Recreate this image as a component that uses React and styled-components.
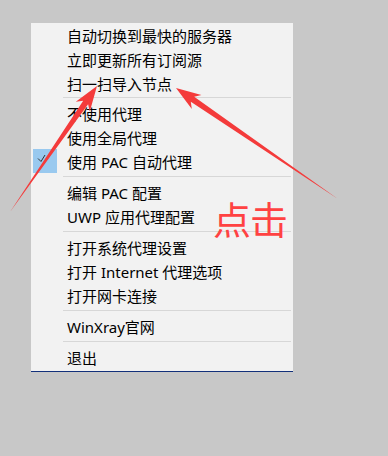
import React from "react";
import styled, { createGlobalStyle } from "styled-components";

const Global = createGlobalStyle`
  html, body { margin: 0; padding: 0; background: #c8c8c8; }
  #root { width: 388px; height: 456px; }
`;

const Screen = styled.div`
  position: relative;
  width: 388px;
  height: 456px;
  box-sizing: border-box;
  padding: 23px 0 0 31px;
  background: #c8c8c8;
  overflow: hidden;
  font-family: "Segoe UI", "Noto Sans", "Noto Sans CJK SC", sans-serif;
`;

const Menu = styled.div`
  width: 262px;
  box-sizing: border-box;
  background: #f2f2f2;
  padding-bottom: 2px;
  border-bottom: 1px solid #13307a;
  display: flex;
  flex-direction: column;
`;

const Row = styled.div`
  height: 24px;
  display: flex;
  align-items: center;
  font-size: 15px;
  color: #000;
  white-space: nowrap;
`;

const Gutter = styled.div`
  width: 36px;
  height: 24px;
  box-sizing: border-box;
  padding-left: 2px;
  flex: none;
`;

const CheckBox = styled.div`
  width: 24px;
  height: 24px;
  background: #99c9ef;
  display: flex;
  align-items: center;
  justify-content: center;
`;

const Separator = styled.div`
  height: 1px;
  background: #d7d7d7;
  margin: ${(p) => (p.$first ? "2px" : "3px")} 2px 3px 32px;
`;

const Overlay = styled.svg`
  position: absolute;
  left: 0;
  top: 0;
  pointer-events: none;
`;

const Note = styled.div`
  position: absolute;
  left: 213px;
  top: 199px;
  font-family: "Noto Sans CJK SC", sans-serif;
  font-size: 38px;
  line-height: 1;
  color: #ff4242;
  letter-spacing: -1px;
`;

function arrowPoints(tail, tip, headLen = 25, headHalf = 8.5, neckHalf = 3) {
  const dx = tip[0] - tail[0];
  const dy = tip[1] - tail[1];
  const L = Math.hypot(dx, dy);
  const u = [dx / L, dy / L];
  const n = [-u[1], u[0]];
  const at = (back, side) => [
    tip[0] - u[0] * back + n[0] * side,
    tip[1] - u[1] * back + n[1] * side,
  ];
  const pts = [
    tail,
    at(headLen - 5, -neckHalf),
    at(headLen, -headHalf),
    tip,
    at(headLen, headHalf),
    at(headLen - 5, neckHalf),
  ];
  return pts.map((p) => `${p[0].toFixed(1)},${p[1].toFixed(1)}`).join(" ");
}

const groups = [
  ["自动切换到最快的服务器", "立即更新所有订阅源", "扫一扫导入节点"],
  ["不使用代理", "使用全局代理", { label: "使用 PAC 自动代理", checked: true }],
  ["编辑 PAC 配置", "UWP 应用代理配置"],
  ["打开系统代理设置", "打开 Internet 代理选项", "打开网卡连接"],
  ["WinXray官网"],
  ["退出"],
];

function Item({ item }) {
  const label = typeof item === "string" ? item : item.label;
  const checked = typeof item === "object" && item.checked;
  return (
    <Row>
      <Gutter>
        {checked && (
          <CheckBox>
            <svg width="24" height="24" viewBox="0 0 24 24">
              <polyline points="5,9.5 8,12.5 12,6" fill="none" stroke="#333" strokeWidth="1" />
            </svg>
          </CheckBox>
        )}
      </Gutter>
      {label}
    </Row>
  );
}

export default function App() {
  return (
    <>
      <Global />
      <Screen>
        <Menu>
          {groups.map((g, gi) => (
            <React.Fragment key={gi}>
              {gi > 0 && <Separator $first={gi === 1} />}
              {g.map((it, i) => (
                <Item key={i} item={it} />
              ))}
            </React.Fragment>
          ))}
        </Menu>
        <Note>点击</Note>
        <Overlay width="388" height="456" viewBox="0 0 388 456">
          <polygon points={arrowPoints([10, 212], [97, 86])} fill="#f43b3b" />
          <polygon points={arrowPoints([338, 199], [176, 88])} fill="#f43b3b" />
        </Overlay>
      </Screen>
    </>
  );
}
